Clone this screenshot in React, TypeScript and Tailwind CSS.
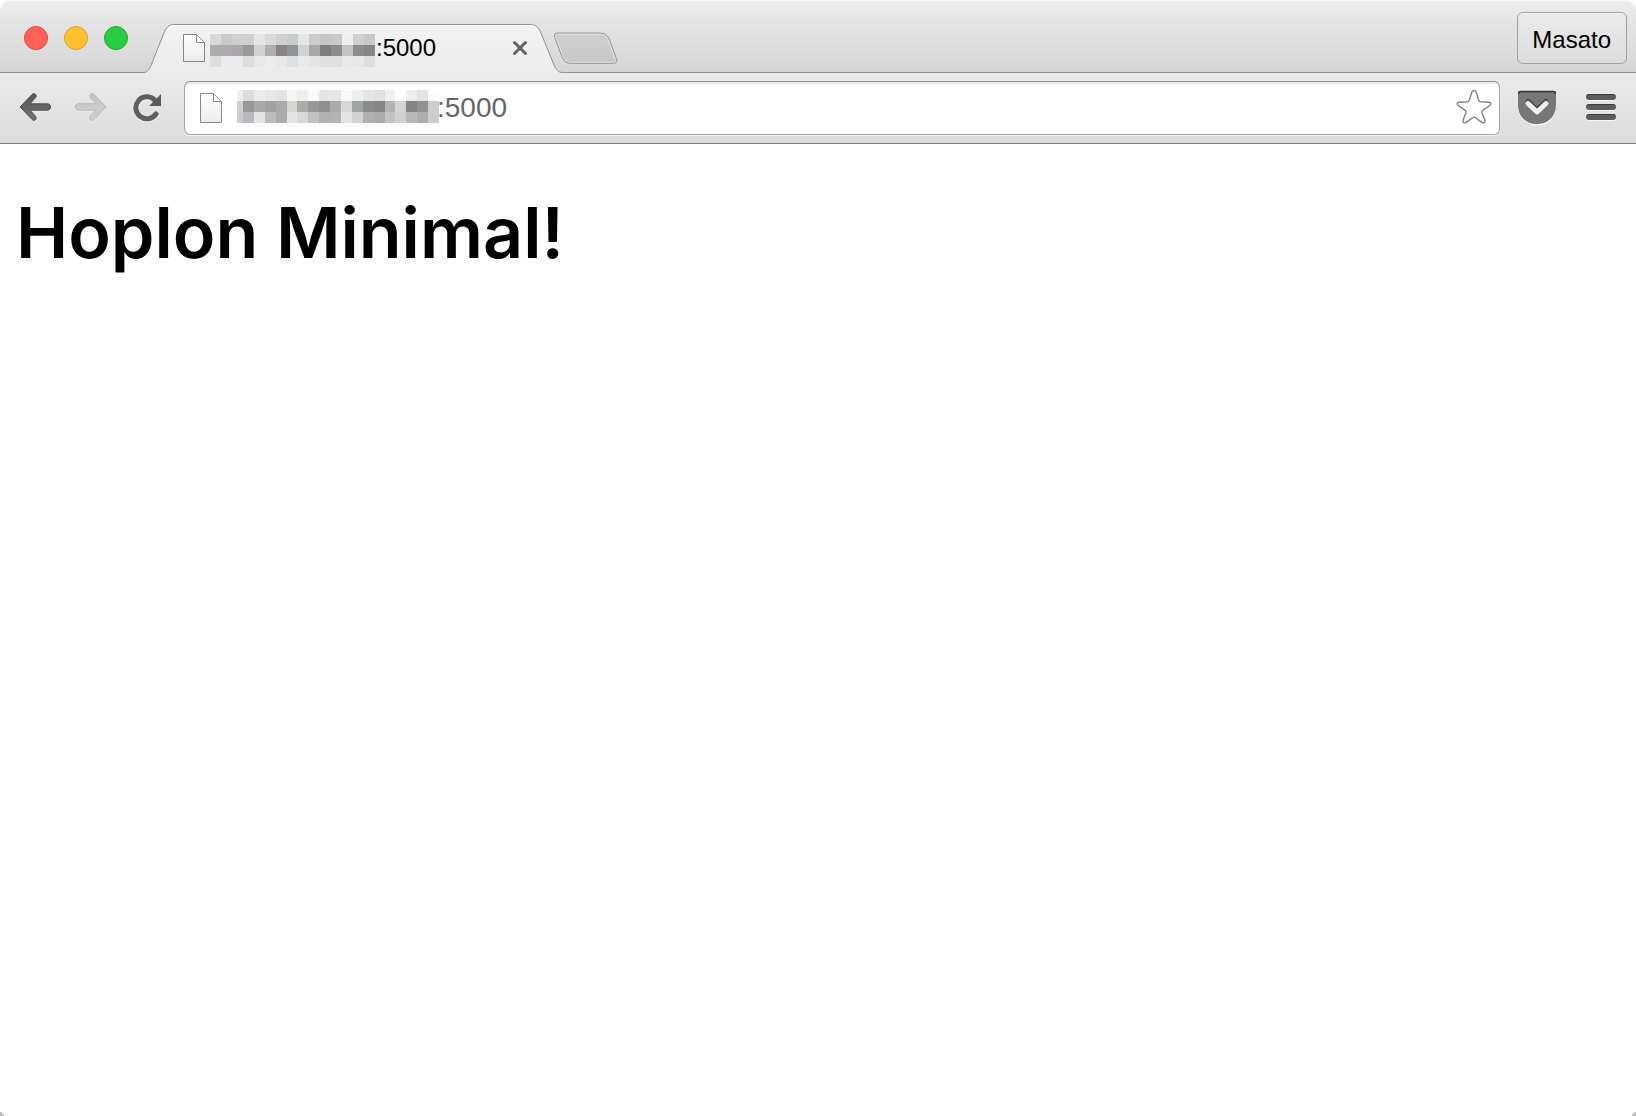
import React from "react";

const tabMosaic: string[][] = [
  ["#d9d8d6", "#c7c9ca", "#d2cfd1", "#d0cece", "#e4e5e5", "#dadada", "#d1cecf", "#c9cbcc", "#e6e7e7", "#cfcdcc", "#c5c5c4", "#c8c9c8", "#ecf0ef", "#d1cecf", "#c7c8c8"],
  ["#adacab", "#abaab0", "#aea7aa", "#989b9a", "#d1d1d1", "#afafad", "#8a8286", "#929598", "#cfd1d4", "#a8a8a6", "#7d7e7d", "#8b8d8e", "#c5c2c4", "#8f8a8c", "#858686"],
  ["#dedede", "#e9ebea", "#e8ebeb", "#dcdddd", "#e7e8e8", "#ececec", "#e8e8e8", "#dedede", "#e8e9e9", "#e4e4e4", "#dfdfdf", "#e0e0e0", "#e9e9e9", "#e7e7e7", "#dcdddd"],
];

const urlMosaic: string[][] = [
  ["#eeeef0", "#dcdcdc", "#ebecee", "#e8e7e6", "#e1e4e5", "#f8f7f4", "#ebedee", "#fafafa", "#e3e4e3", "#e5e7e7", "#f8f8f6", "#eceff0", "#e5e5e5", "#dfe1e2", "#eef0f1", "#ffffff", "#ededed", "#e2e3e4", "#fcfcfb"],
  ["#cfcfd0", "#979899", "#a8a9ab", "#a1a1a1", "#a9abaa", "#d5d5d3", "#acaba8", "#9a9798", "#918e90", "#a9abb0", "#d8d7d6", "#a2a3a5", "#8a8b8c", "#868687", "#b0b4b6", "#d5d4d2", "#858485", "#929192", "#cdcdcd"],
  ["#cfcbcb", "#b8b9bf", "#e4e3e7", "#bdbdbd", "#abacac", "#e3e5e4", "#d9dad5", "#c2c2c2", "#b3b0b1", "#b2b3b5", "#e3e4e6", "#d3d3d5", "#b0b0af", "#acabab", "#c2c5c6", "#d0cfcd", "#b9b7b7", "#aeacad", "#cccccc"],
];

function Mosaic({ rows, kind }: { rows: string[][]; kind: "tab" | "url" }) {
  return (
    <span aria-hidden="true" className={kind === "tab" ? "block w-[165px]" : "block w-[202px]"}>
      {rows.map((row, r) => (
        <span key={r} className="flex h-[11px]">
          {row.map((color, c) => (
            <span
              key={c}
              className={kind === "url" && c === 0 ? "h-full w-1.5 shrink-0" : "h-full flex-1"}
              style={{ backgroundColor: color }}
            />
          ))}
        </span>
      ))}
      {kind === "url" && <span className="block h-1 bg-[#fafafa]" />}
    </span>
  );
}

function PageIcon({ id, size }: { id: string; size: "small" | "large" }) {
  const h = size === "small" ? 28 : 30;
  return (
    <svg width="22" height={h} viewBox={`0 0 22 ${h}`} className="shrink-0" aria-hidden="true">
      <defs>
        <linearGradient id={id} x1="0" y1="0" x2="0" y2="1">
          <stop offset="0" stopColor="#fff" />
          <stop offset="1" stopColor="#ececec" />
        </linearGradient>
      </defs>
      <path d={`M.5.5H13.5L21.5 8.5V${h - 0.5}H.5Z`} fill={`url(#${id})`} stroke="#858585" />
      <path d="M13.5 1V8.5H21" fill="#fff" stroke="#858585" />
    </svg>
  );
}

function Arrow({ dir }: { dir: "back" | "forward" }) {
  const back = dir === "back";
  const id = `arrow-${dir}`;
  const d = "M1 15 13 2.5C15.500.2 18.500 3 16.500 5.800L11 11.800H28.500C32.500 11.800 32.500 18.200 28.500 18.200H11L16.500 24.200C18.500 27 15.500 29.800 13 27.500Z";
  return (
    <svg width="34" height="32" viewBox="0 0 34 32" aria-hidden="true" className={back ? "" : "-scale-x-100"}>
      <defs>
        <linearGradient id={id} x1="0" y1="0" x2="0" y2="1">
          <stop offset="0" stopColor={back ? "#555" : "#c3c3c3"} />
          <stop offset="1" stopColor={back ? "#727272" : "#d2d2d2"} />
        </linearGradient>
      </defs>
      <path d={d} transform="translate(0 1)" fill="#fff" opacity=".7" />
      <path d={d} fill={`url(#${id})`} stroke={back ? "#505050" : "#b4b4b4"} strokeLinejoin="round" />
    </svg>
  );
}

function ReloadIcon() {
  return (
    <svg width="30" height="30" viewBox="0 0 30 30" aria-hidden="true">
      <g fill="none" stroke="#fff" opacity=".7" transform="translate(0 1)">
        <path d="M23.2 21.2A11 11 0 1 1 21.6 6.6" strokeWidth="5" strokeLinecap="round" />
      </g>
      <path d="M23 21A11 11 0 1 1 21.4 6.8" fill="none" stroke="#5f5f5f" strokeWidth="5" strokeLinecap="round" />
      <path d="M28 1V13H16Z" fill="#5c5c5c" />
    </svg>
  );
}

function TabShape() {
  return (
    <svg width="422" height="50" viewBox="0 0 422 50" className="absolute left-0 top-0" aria-hidden="true">
      <defs>
        <linearGradient id="tab-fill" x1="0" y1="0" x2="0" y2="1">
          <stop offset="0" stopColor="#f3f3f3" />
          <stop offset="1" stopColor="#ebebeb" />
        </linearGradient>
      </defs>
      <path
        d="M0 50V49.5C4 49.5 6 47 8 42.5L20.5 11C23 5 25 1.5 32 1.5H386C393 1.5 395.5 4 398 10L411 42C413.5 47 415 49.5 420 49.5V50Z"
        fill="url(#tab-fill)"
      />
      <path
        d="M0 49.5C4 49.5 6 47 8 42.5L20.5 11C23 5 25 1.5 32 1.5H386C393 1.5 395.5 4 398 10L411 42C413.5 47 415 49.5 420 49.5"
        fill="none"
        stroke="#8e8e8e"
      />
      <path d="M24 8C26 4 28 2.5 32 2.5H386C390 2.5 393 4 395 7" fill="none" stroke="#fff" />
    </svg>
  );
}

function TabStrip() {
  return (
    <header className="flex h-[73px] items-start rounded-t-[10px] border-b border-[#929292] bg-linear-to-b from-[#ececec] to-[#d5d5d5] shadow-[inset_0_1px_0_#f8f8f8]">
      <div className="flex gap-4 pt-[26px] pl-6">
        <button aria-label="Close window" className="size-6 rounded-full border border-[#e2463f] bg-[#ff6058]" />
        <button aria-label="Minimize window" className="size-6 rounded-full border border-[#dfa023] bg-[#ffbf2f]" />
        <button aria-label="Zoom window" className="size-6 rounded-full border border-[#1dac2c] bg-[#29cd41]" />
      </div>
      <div className="relative mt-[23px] ml-[15px] h-[50px] w-[422px] shrink-0">
        <TabShape />
        <div className="relative flex h-full items-start pl-10">
          <span className="pt-[11px]">
            <PageIcon id="tab-page" size="small" />
          </span>
          <span className="mt-[11px] ml-[5px]">
            <Mosaic rows={tabMosaic} kind="tab" />
          </span>
          <span className="mt-[9px] ml-px text-2xl leading-8 text-black">:5000</span>
          <button aria-label="Close tab" className="mt-[17px] mr-[37px] ml-auto">
            <svg width="16" height="16" viewBox="0 0 16 16" aria-hidden="true">
              <path d="M2.5 2.5 13.5 13.5M13.5 2.5 2.5 13.5" stroke="#626262" strokeWidth="3" strokeLinecap="round" />
            </svg>
          </button>
        </div>
      </div>
      <button aria-label="New tab" className="-ml-3 mt-8">
        <svg width="65" height="33" viewBox="0 0 66 33" aria-hidden="true">
          <defs>
            <linearGradient id="new-tab" x1="0" y1="0" x2="0" y2="1">
              <stop offset="0" stopColor="#cfcfcf" />
              <stop offset="1" stopColor="#c7c7c7" />
            </linearGradient>
          </defs>
          <path
            d="M4.500 .8H47.500C53 .8 55.500 3 57.500 8L64.500 27C65.600 30 64.500 31.500 61.500 31.500H18.500C13 31.500 11 29 9 24.500L1.800 5.500C.8 2.500 1.800 .8 4.500 .8Z"
            fill="url(#new-tab)"
            stroke="#929292"
          />
          <path
            d="M5 2H47C52.500 2 54.500 4 56.500 9L63.300 27.500C63.900 29.700 63.300 30.400 61 30.400H19C14 30.400 12 28 10 24L3 5.500C2.200 3.200 2.800 2 5 2Z"
            fill="none"
            stroke="#e2e2e2"
          />
        </svg>
      </button>
      <button className="mt-3 mr-[9px] ml-auto h-[52px] rounded-md border border-[#a0a0a0] bg-linear-to-b from-[#ebebeb] to-[#dcdcdc] pt-[3px] pr-[15px] pl-3.5 text-2xl text-black shadow-[inset_0_1px_0_#f4f4f4]">
        Masato
      </button>
    </header>
  );
}

function Toolbar() {
  return (
    <nav className="flex h-[71px] items-center border-b border-[#7d7d7d] bg-linear-to-b from-[#ebebeb] to-[#dcdcdc] pr-5 pl-[19px]">
      <button aria-label="Back">
        <Arrow dir="back" />
      </button>
      <button aria-label="Forward" className="ml-5">
        <Arrow dir="forward" />
      </button>
      <button aria-label="Reload" className="ml-[26px]">
        <ReloadIcon />
      </button>
      <div className="ml-[21px] flex h-[54px] min-w-0 flex-1 items-center rounded-md border border-[#a3a3a3] border-t-[#8f8f8f] bg-white pr-[7px] pl-[15px] shadow-[inset_0_2px_1px_#ececec,0_1px_0_#f4f4f4]">
        <PageIcon id="url-page" size="large" />
        <span className="mr-[-2px] ml-[15px] shrink-0">
          <Mosaic rows={urlMosaic} kind="url" />
        </span>
        <input
          aria-label="Address"
          defaultValue=":5000"
          className="h-10 min-w-0 flex-1 bg-transparent text-[28px] text-[#666] outline-none"
        />
        <button aria-label="Bookmark this page" className="pb-0.5">
          <svg width="36" height="36" viewBox="0 0 36 36" aria-hidden="true">
            <path
              d="M15.900 2.800Q18 .3 20.100 2.800L22.800 11.600Q23.200 12.700 24.400 12.800L33.200 13.200Q36 14.200 33.900 16.300L26.500 21.600Q25.600 22.300 25.900 23.400L29 31.500Q29.200 34.300 26.500 33.700L19 28.500Q18 27.800 17 28.500L9.500 33.700Q6.800 34.300 7 31.500L10.100 23.400Q10.400 22.300 9.500 21.600L2.100 16.300Q0 14.200 2.800 13.200L11.600 12.800Q12.800 12.700 13.200 11.600Z"
              fill="#fff"
              stroke="#888"
              strokeWidth="1.500"
            />
          </svg>
        </button>
      </div>
      <button aria-label="Save to Pocket" className="ml-[18px]">
        <svg width="38" height="36" viewBox="0 0 38 36" aria-hidden="true">
          <path d="M0 4Q0 2 2 2H36Q38 2 38 4V16C38 42 0 42 0 16Z" fill="#fff" />
          <path d="M0 3Q0 1 2 1H36Q38 1 38 3V15C38 40.500 0 40.500 0 15Z" fill="#777" />
          <path d="M.5 4Q.5 1.500 2.500 1.500H35.500Q37.500 1.500 37.500 4" fill="none" stroke="#333" strokeWidth="1.500" />
          <path d="M10 11.500 19 20 28 11.500" fill="none" stroke="#444" strokeWidth="5" strokeLinecap="round" strokeLinejoin="round" />
          <path d="M10 13.500 19 22 28 13.500" fill="none" stroke="#f1f1f1" strokeWidth="5" strokeLinecap="round" strokeLinejoin="round" />
        </svg>
      </button>
      <button aria-label="Menu" className="ml-[30px] flex w-[30px] flex-col gap-1 pb-0.5">
        <span className="h-1.5 rounded-full border-t border-[#3c3c3c] bg-[#5c5c5c] shadow-[0_1px_0_#f6f6f6]" />
        <span className="h-1.5 rounded-full border-t border-[#3c3c3c] bg-[#5c5c5c] shadow-[0_1px_0_#f6f6f6]" />
        <span className="h-1.5 rounded-full border-t border-[#3c3c3c] bg-[#5c5c5c] shadow-[0_1px_0_#f6f6f6]" />
      </button>
    </nav>
  );
}

export default function App() {
  return (
    <div className="relative flex min-h-screen flex-col bg-white font-['Liberation_Sans',Arial,sans-serif]">
      <TabStrip />
      <Toolbar />
      <main className="flex-1 px-4 pt-[49px]">
        <h1 className="font-['Inter','Liberation_Sans',sans-serif] text-[70px] leading-[80px] font-semibold text-black">
          Hoplon Minimal!
        </h1>
      </main>
      <svg width="4" height="4" viewBox="0 0 4 4" className="absolute bottom-0 left-0" aria-hidden="true">
        <path d="M0 0H2V2H4V4H0Z" fill="#bdbdbd" />
      </svg>
      <svg width="4" height="4" viewBox="0 0 4 4" className="absolute right-0 bottom-0" aria-hidden="true">
        <path d="M4 0H2V2H0V4H4Z" fill="#bdbdbd" />
      </svg>
    </div>
  );
}
